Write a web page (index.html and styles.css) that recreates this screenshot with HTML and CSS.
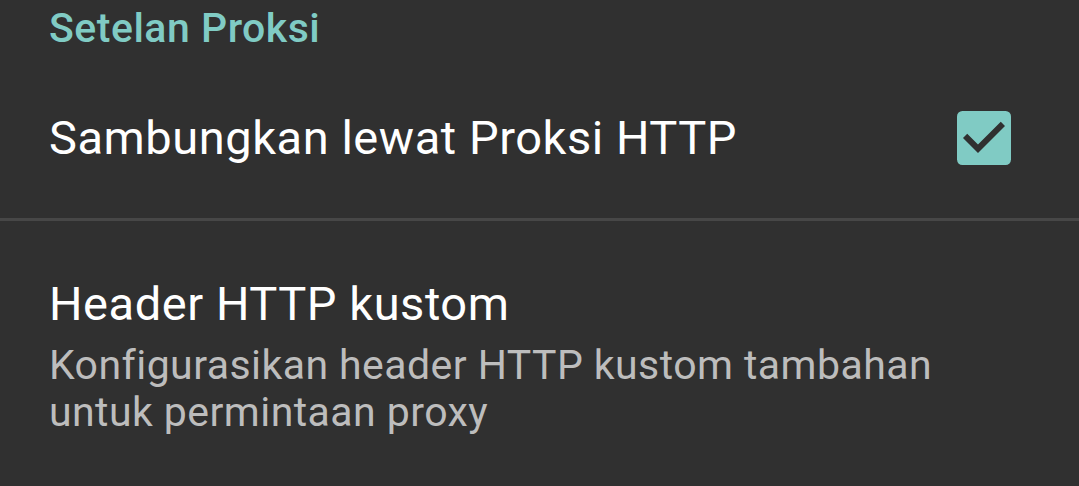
FILE: index.html
```html
<!DOCTYPE html>
<html lang="id">
<head>
<meta charset="utf-8">
<title>Setelan Proksi</title>
<link rel="stylesheet" href="styles.css">
</head>
<body>
<div class="screen">
  <div class="category">Setelan Proksi</div>
  <div class="pref pref-check">
    <div class="pref-title">Sambungkan lewat Proksi HTTP</div>
    <svg class="checkbox" viewBox="3 3 18 18" width="54" height="54" aria-hidden="true">
      <rect x="3" y="3" width="18" height="18" rx="1.8" fill="#80cbc4"/>
      <path d="M10 17l-5-5 1.41-1.41L10 14.17l7.59-7.59L19 8l-9 9z" fill="#303030"/>
    </svg>
  </div>
  <div class="divider"></div>
  <div class="pref pref-text">
    <div class="pref-title">Header HTTP kustom</div>
    <div class="pref-summary">Konfigurasikan header HTTP kustom tambahan<br>untuk permintaan proxy</div>
  </div>
</div>
</body>
</html>
```

FILE: styles.css
```css
html, body {
  margin: 0;
  padding: 0;
  background: #303030;
}

.screen {
  width: 1079px;
  height: 486px;
  overflow: hidden;
  background: #303030;
  font-family: Roboto, "Noto Sans", sans-serif;
}

.category {
  height: 57px;
  padding: 4px 0 0 49px;
  box-sizing: border-box;
  font-size: 41px;
  font-weight: 500;
  line-height: 48px;
  letter-spacing: 0.5px;
  color: #80cbc4;
}

.pref {
  padding: 0 68px 0 49px;
}

.pref-check {
  height: 161px;
  display: flex;
  align-items: center;
  justify-content: space-between;
}

.pref-title {
  font-size: 47px;
  line-height: 55px;
  letter-spacing: 0.55px;
  color: #ffffff;
}

.checkbox {
  display: block;
  flex: none;
}

.divider {
  height: 3px;
  background: #474747;
}

.pref-text {
  padding-top: 55px;
}

.pref-summary {
  margin-top: 11px;
  font-size: 41px;
  line-height: 47px;
  letter-spacing: 0.44px;
  color: #bdbdbd;
}
```
